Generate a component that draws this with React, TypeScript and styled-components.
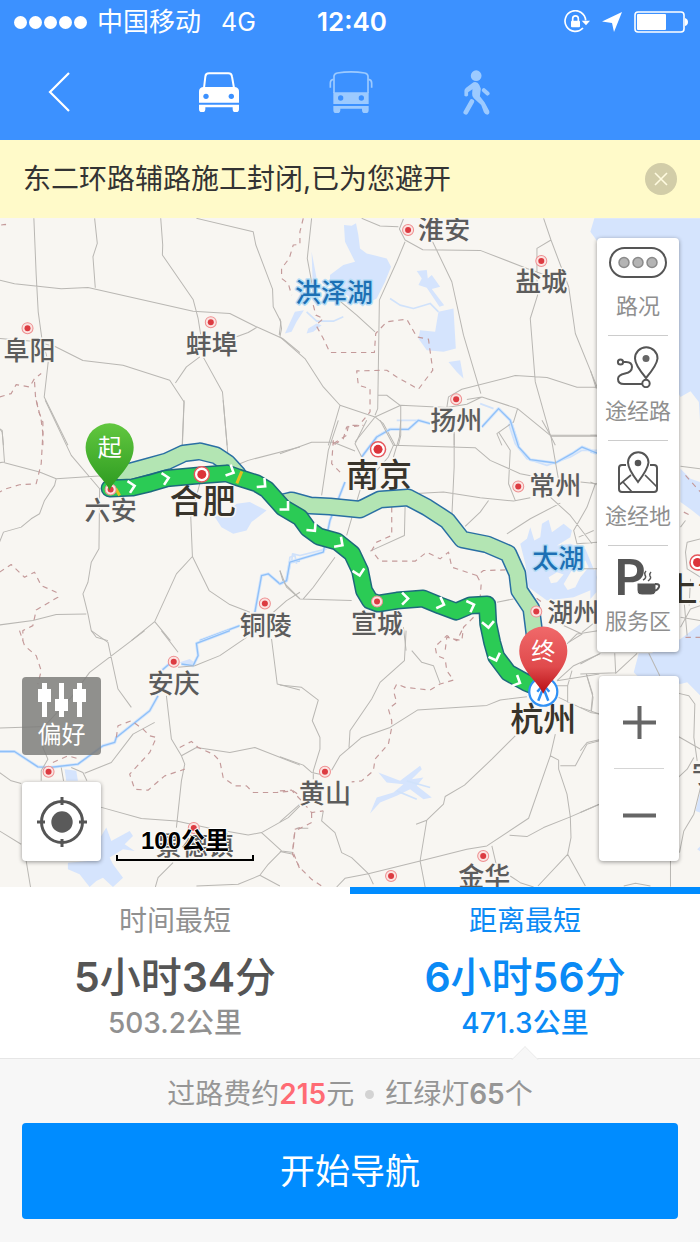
import React from 'react';
import styled, { createGlobalStyle } from 'styled-components';

const GlobalStyle = createGlobalStyle`
  *, *::before, *::after { box-sizing: border-box; }
  body {
    margin: 0;
    background: #f7f7f7;
    font-family: Inter, "Noto Sans CJK SC", sans-serif;
    color: #333;
  }
  button { font: inherit; color: inherit; border: 0; padding: 0; margin: 0; background: none; cursor: pointer; }
  p, ul { margin: 0; padding: 0; }
  ul { list-style: none; }
  svg { display: block; }
`;

const Page = styled.div`
  display: flex;
  flex-direction: column;
  min-height: 100vh;
`;

/* ---------- header ---------- */

const Header = styled.header`
  background: #3c91ff;
  color: #fff;
`;

const StatusBar = styled.div`
  display: grid;
  grid-template-columns: 1fr auto 1fr;
  align-items: center;
  height: 44px;
  padding: 0 12px 0 16px;
`;

const StatusGroup = styled.div<{ $end?: boolean }>`
  display: flex;
  align-items: center;
  justify-content: ${(p) => (p.$end ? 'flex-end' : 'flex-start')};
  gap: ${(p) => (p.$end ? 12 : 10)}px;
`;

const Signal = styled.div`
  display: flex;
  gap: 2px;
  margin-left: -2px;
`;

const SignalDot = styled.span`
  width: 13px;
  height: 13px;
  border-radius: 50%;
  background: #fff;
`;

const Carrier = styled.span`
  font-size: 26px;
  line-height: 32px;
`;

const Network = styled.span`
  font-size: 25px;
  line-height: 32px;
  padding-left: 10px;
`;

const Clock = styled.span`
  font-size: 26px;
  line-height: 32px;
  font-weight: 600;
`;

const NavBar = styled.nav`
  display: flex;
  align-items: center;
  height: 96px;
  padding-left: 48px;
  gap: 129px;
`;

const Modes = styled.div`
  display: flex;
  align-items: center;
  gap: 90px;
`;

const NavButton = styled.button<{ $active?: boolean }>`
  display: flex;
  color: ${(p) => (p.$active ? '#fff' : '#9ccaff')};
`;

/* ---------- notice ---------- */

const Notice = styled.div`
  display: flex;
  align-items: center;
  justify-content: space-between;
  min-height: 78px;
  padding: 0 23px;
  background: #fffac9;
`;

const NoticeText = styled.p`
  font-size: 28px;
  line-height: 40px;
`;

const CloseButton = styled.button`
  display: flex;
  align-items: center;
  justify-content: center;
  flex: none;
  width: 32px;
  height: 32px;
  border-radius: 50%;
  background: #d2cda8;
`;

/* ---------- map ---------- */

const MapArea = styled.main`
  position: relative;
  display: flex;
  justify-content: space-between;
  flex: 1;
  min-height: 660px;
  padding: 20px 21px 26px 22px;
  background: #f8f6f2;
  overflow: hidden;
`;

const MapCanvas = styled.svg`
  position: absolute;
  inset: 0;
  width: 100%;
  height: 100%;
  font-family: "Noto Sans CJK SC", sans-serif;
`;

const LeftControls = styled.div`
  position: relative;
  display: flex;
  align-items: flex-end;
  gap: 15px;
`;

const ButtonStack = styled.div`
  display: flex;
  flex-direction: column;
  gap: 27px;
`;

const PreferenceButton = styled.button`
  display: flex;
  flex-direction: column;
  align-items: center;
  justify-content: center;
  gap: 2px;
  width: 79px;
  height: 78px;
  border-radius: 4px;
  background: rgba(124, 124, 121, 0.84);
  color: #fff;
  font-size: 24px;
  line-height: 30px;
`;

const LocateButton = styled.button`
  display: flex;
  align-items: center;
  justify-content: center;
  width: 79px;
  height: 79px;
  border-radius: 4px;
  background: #fff;
  box-shadow: 0 1px 4px rgba(0, 0, 0, 0.4);
`;

const Scale = styled.div`
  width: 138px;
  text-align: center;
  color: #000;
  font-family: "Liberation Sans", "Noto Sans CJK SC", sans-serif;
  font-size: 24px;
  font-weight: 700;
  line-height: 28px;
  text-shadow: 1px 0 #fff, -1px 0 #fff, 0 1px #fff, 0 -1px #fff;
`;

const ScaleBar = styled.div`
  height: 6px;
  border: solid #000;
  border-width: 0 2px 2px;
`;

const RightControls = styled.div`
  position: relative;
  display: flex;
  flex-direction: column;
  align-items: flex-end;
  justify-content: space-between;
  gap: 24px;
`;

const Card = styled.ul`
  border-radius: 4px;
  background: #fff;
  box-shadow: 0 1px 4px rgba(0, 0, 0, 0.4);
`;

const LayerItem = styled.li`
  margin: 0 11px;
  padding: 10px 0 16px;
  border-top: 1px solid #ccc;

  &:first-child { padding-top: 2px; border-top-color: transparent; }
  &:last-child { padding-bottom: 18px; }
`;

const LayerButton = styled.button`
  display: flex;
  flex-direction: column;
  align-items: center;
  gap: 10px;
  width: 60px;
  color: #8f8f8f;
  font-size: 22px;
  line-height: 26px;
  white-space: nowrap;
`;

const LayerLabel = styled.span`
  display: flex;
  justify-content: center;
  width: 66px;
`;

const ZoomItem = styled.li`
  margin: 0 15px;

  & + & { border-top: 1px solid #d5d5d5; }
`;

const ZoomButton = styled.button`
  display: flex;
  align-items: center;
  justify-content: center;
  width: 50px;
  height: 92px;
`;

/* ---------- route choices ---------- */

const Choices = styled.section`
  display: grid;
  grid-template-columns: 1fr 1fr;
  background: #fff;
  border-bottom: 1px solid #e6e6e6;
`;

const Choice = styled.button<{ $active?: boolean }>`
  position: relative;
  display: flex;
  flex-direction: column;
  align-items: center;
  padding: 10px 0 18px;
  border-top: 7px solid ${(p) => (p.$active ? '#008cff' : '#fff')};
  color: ${(p) => (p.$active ? '#0a8af5' : '#909090')};

  ${(p) =>
    p.$active &&
    `&::after {
      content: '';
      position: absolute;
      left: 50%;
      bottom: -12px;
      width: 20px;
      height: 20px;
      margin-left: -10px;
      background: #f7f7f7;
      border: solid #ececec;
      border-width: 1px 0 0 1px;
      transform: rotate(45deg);
      clip-path: polygon(0 0, 100% 0, 0 100%);
    }`}
`;

const ChoiceTitle = styled.span`
  font-size: 28px;
  line-height: 34px;
`;

const ChoiceTime = styled.span<{ $active?: boolean }>`
  margin: 14px 0 4px;
  font-size: 41px;
  line-height: 50px;
  font-weight: 500;
  color: ${(p) => (p.$active ? 'inherit' : '#555')};
`;

const Digits = styled.b`
  font-weight: 600;
`;

const ChoiceDistance = styled.span`
  font-size: 28px;
  line-height: 34px;
  font-weight: 500;
`;

/* ---------- footer ---------- */

const Footer = styled.footer`
  padding: 18px 22px 24px;
  background: #f7f7f7;
`;

const Summary = styled.p`
  display: flex;
  align-items: center;
  justify-content: center;
  margin-bottom: 12px;
  font-size: 28px;
  line-height: 34px;
  color: #969696;
`;

const Toll = styled(Digits)`
  color: #ff6b74;
`;

const Dot = styled.span`
  width: 9px;
  height: 9px;
  margin: 0 11px;
  border-radius: 50%;
  background: #d3d3d3;
`;

const StartButton = styled.button`
  display: block;
  width: 100%;
  height: 96px;
  border-radius: 4px;
  background: #008cff;
  color: #fff;
  font-size: 35px;
  line-height: 44px;
`;

/* ---------- icons ---------- */

const BackIcon = () => (
  <svg width="22" height="42" viewBox="0 0 22 42" fill="none" stroke="#fff" strokeWidth="2.2">
    <path d="M21 2 L2 21 L21 40" />
  </svg>
);

const CarIcon = () => (
  <svg width="40" height="40" viewBox="0 0 120 120" fill="currentColor">
    <path d="M15 48 L19 14 Q20 4 30 4 H88 Q98 4 99 14 L105 48" fill="none" stroke="currentColor" strokeWidth="6" />
    <path d="M12 45 H108 Q120 47 120 58 V92 H0 V58 Q0 47 12 45Z" />
    <path d="M0 98 H120 V112 Q120 121 110 121 Q101 121 101 112 V106 H19 V112 Q19 121 10 121 Q0 121 0 112Z" />
    <g fill="#3c91ff">
      <circle cx="21" cy="73" r="8" />
      <circle cx="97" cy="73" r="8" />
    </g>
  </svg>
);

const BusIcon = () => (
  <svg width="44" height="42" viewBox="0 0 130 126" fill="currentColor">
    <path d="M14 66 V16 Q14 8 24 6 Q65 -1 106 6 Q116 8 116 16 V66" fill="none" stroke="currentColor" strokeWidth="5" />
    <path d="M12 64 H118 V99 H12Z" />
    <path d="M12 105 H118 V118 Q118 127 108 127 Q98 127 98 118 V113 H33 V118 Q33 127 22 127 Q12 127 12 118Z" />
    <path d="M13 25 Q3 26 3 36 V50 M117 25 Q127 26 127 36 V50" fill="none" stroke="currentColor" strokeWidth="5" />
    <g fill="#3c91ff">
      <circle cx="34" cy="81" r="8" />
      <circle cx="96" cy="81" r="8" />
    </g>
  </svg>
);

const WalkIcon = () => (
  <svg width="27" height="45" viewBox="0 0 80 134" fill="none" stroke="currentColor" strokeLinecap="round" strokeLinejoin="round">
    <circle cx="39" cy="17" r="16" fill="currentColor" stroke="none" />
    <path d="M36 36 Q44 36 48 44 L53 56 L50 78 L64 96 L78 122 Q80 132 72 133 Q66 133 62 126 L54 104 L32 84 Q26 78 27 70 L28 57 L15 66 V76 Q10 82 4 77 V62 Q4 57 9 53 L26 40 Q31 36 36 36Z" fill="currentColor" stroke="none" />
    <path d="M62 60 L73 70" strokeWidth="12" />
    <path d="M26 94 L8 126" strokeWidth="14" />
  </svg>
);

const RotationLockIcon = () => (
  <svg width="26" height="24" viewBox="0 0 78 70" fill="#fff">
    <path d="M57 53 A31 31 0 1 1 65 30" fill="none" stroke="#fff" strokeWidth="5" />
    <path d="M53 31 H78 L66 45Z" />
    <rect x="21" y="31" width="27" height="20" rx="3" />
    <path d="M26 32 V25 A8 8 0 0 1 43 25 V32" fill="none" stroke="#fff" strokeWidth="5" />
  </svg>
);

const LocationIcon = () => (
  <svg width="20" height="20" viewBox="0 0 20 20" fill="#fff">
    <path d="M20 0 L12 20 L10 11 L0 9.500Z" />
  </svg>
);

const BatteryIcon = () => (
  <svg width="54" height="22" viewBox="0 0 54 22" fill="#fff">
    <rect x="1" y="1" width="49" height="20" rx="3" fill="none" stroke="#fff" strokeWidth="1.6" />
    <rect x="3" y="3" width="29" height="16" rx="1" />
    <path d="M51 7 Q54 8 54 11 Q54 14 51 15Z" />
  </svg>
);

const CrossIcon = () => (
  <svg width="14" height="14" viewBox="0 0 14 14" stroke="#fffbe0" strokeWidth="1.6">
    <path d="M1 1 L13 13 M13 1 L1 13" />
  </svg>
);

const SlidersIcon = () => (
  <svg width="50" height="36" viewBox="0 0 50 36" fill="#fff">
    <path d="M5 1h5v34h-5z M22 1h5v34h-5z M40 1h5v34h-5z" />
    <path d="M1 7h13v13h-13z M18 17h13v12h-13z M36 7h13v13h-13z" />
  </svg>
);

const TargetIcon = () => (
  <svg width="50" height="50" viewBox="0 0 50 50" fill="none" stroke="#555" strokeWidth="3">
    <circle cx="25" cy="25" r="20.5" />
    <circle cx="25" cy="25" r="10.7" fill="#5a5a5a" stroke="none" />
    <path d="M25 0 V8 M25 42 V50 M0 25 H8 M42 25 H50" />
  </svg>
);

const LayerIcon = ({ children }: { children: React.ReactNode }) => (
  <svg width="60" height="42" viewBox="0 0 60 42" fill="none" stroke="#555" strokeWidth="2">
    {children}
  </svg>
);

const layers = [
  {
    label: '路况',
    icon: (
      <LayerIcon>
        <rect x="2" y="7" width="56" height="29" rx="14.5" />
        <g fill="#b4b4b4" stroke="#8a8a8a" strokeWidth="1.5">
          <circle cx="16" cy="21.5" r="5" />
          <circle cx="30" cy="21.5" r="5" />
          <circle cx="44" cy="21.5" r="5" />
        </g>
      </LayerIcon>
    ),
  },
  {
    label: '途经路',
    icon: (
      <LayerIcon>
        <path d="M38 32 Q27 19 27 12.5 A11 11 0 0 1 49.500 12.500 Q49 19 38 32Z" />
        <circle cx="38" cy="12.500" r="3.500" fill="#666" stroke="none" />
        <circle cx="38" cy="37.500" r="3.700" fill="#fff" />
        <circle cx="12.500" cy="16" r="2.600" />
        <path d="M15 16 H18 Q24 16 24 21 Q24 26 17 27.500 Q10 29 10 33 Q10 38 16 38 H34" />
      </LayerIcon>
    ),
  },
  {
    label: '途经地',
    icon: (
      <LayerIcon>
        <path d="M18 14 H14 Q11 14 11 17 V38 Q11 41 14 41 H46 Q49 41 49 38 V17 Q49 14 46 14 H42" />
        <path d="M11 34 L23 24 M15 31 L24 41 M37 24 L49 36" strokeWidth="1.700" />
        <path d="M30 31 Q20 18 20 11.500 A10 10 0 0 1 40.500 11.500 Q40 18 30 31Z" fill="#fff" />
        <circle cx="30" cy="12" r="3.300" fill="#555" stroke="none" />
      </LayerIcon>
    ),
  },
  {
    label: '服务区',
    icon: (
      <LayerIcon>
        <text x="6" y="39" fill="#555" stroke="none" fontFamily="Lato, sans-serif" fontWeight="700" fontSize="50">P</text>
        <path d="M29 27 H48 V34 Q48 39 43 39 H34 Q29 39 29 34Z" fill="#555" stroke="#fff" strokeWidth="1" />
        <path d="M47 28 H48 Q52 28 51 31 Q50 34 46 35" />
        <path d="M35 24 Q39 22 37 19 Q36 17 38 15 M40 25 Q44 22 42 20 Q41 18 43 16" strokeWidth="1.500" />
      </LayerIcon>
    ),
  },
];

/* ---------- map data ---------- */

/* Each tile is plotted from its own origin, three units to the pixel. */
type Tile = { x: number; y: number; roads: string; borders?: string; water?: string; land?: string; streams?: string; rivers?: string };

const tiles: Tile[] = [
  {
    x: 0, y: 215,
    roads: 'M103 10 L110 180 L116 290 L127 370 L146 440 L134 545 L205 690 M285 10 L293 85 L280 125 L287 218 M483 10 L489 90 L488 120 L580 253 L595 310 L603 360 L610 425 L668 530 L682 690 M590 10 L760 50 L768 90 L818 222 L820 275 L843 320 L838 360 M0 195 L45 206 L185 221 L265 217 L580 288 L690 295 L770 335 L848 370 L900 412 M0 370 L100 378 L165 393 L250 436 L370 450 L510 495 L553 560 L548 690 M770 337 L745 352 L710 365 M600 425 L560 455 L527 503 M0 640 L8 650 L12 690',
    borders: 'M0 545 L35 535 L50 508 L90 515 L105 490 L125 475 M105 500 L108 545 L118 590 L130 620 L130 690 M5 30 L18 28 L18 44',
  },
  {
    x: 280, y: 215,
    roads: 'M95 10 L82 130 L95 200 L100 235 M245 10 L300 33 L355 35 M370 12 L358 42 L375 75 L428 104 L600 106 L740 160 L790 178 M375 80 L350 140 L298 255 L293 580 L285 600 M455 75 L515 200 L550 360 L602 535 M790 10 L812 75 L865 215 L885 355 L950 515 M812 75 L770 100 L770 178 L772 240 L750 310 L765 500 L810 660 L825 690 M0 365 L75 430 L130 515 L180 570 L285 605 L310 625 L345 690 M180 570 L145 690 M285 605 L225 680 M293 540 L320 540 L362 572 L362 660 L355 690 M285 605 L362 570 L500 577 L560 567 L605 545 L712 580 L810 660 L950 660 M500 577 L505 545 L545 522 L705 481 L800 487 L890 516 L950 516 M560 553 L605 545 M712 580 L700 620 L650 655 L665 690 M170 250 L230 300 L285 350 M0 310 L5 340 L0 365 M522 650 V690',
    borders: 'M70 10 L60 50 L60 88 L40 90 L28 130 L5 160 L5 190 L25 205 L35 240 M100 270 L108 300 L130 310 L108 330 L130 370 L150 412 L283 412 L287 355 L320 320 L380 312 L410 365 L445 372 L458 465 L435 495 L415 522 L350 485 L320 465 L230 467 L235 510 L270 520 L270 590 L235 632 L200 635 L190 670 L160 690',
    water: 'M192 30 L215 32 L228 25 L235 60 L240 100 L260 115 L320 130 L333 155 L315 200 L290 250 L250 270 L150 210 L150 180 L190 150 L225 140 L195 80Z M410 168 L440 165 L443 190 L455 180 L480 215 L455 222 L492 270 L478 275 L440 218 L415 210 L425 190Z M475 290 L520 280 L527 400 L490 410 L440 405 L415 370 L420 345 L465 350 L470 320Z M505 440 L540 435 L550 490 L530 470Z M45 290 L72 285 L50 320 L35 350 L15 355Z M85 340 L110 325 L125 330 L100 350 L80 355Z M95 110 L112 200 L98 200Z',
    streams: 'M330 250 L360 270 L400 280 L450 265 L475 290 M80 290 L110 318 L160 318 L190 305 M600 565 L640 580',
    rivers: 'M275 690 L290 665 L330 642 L385 642 L415 615 L450 625 M605 635 L655 580 L690 615 L715 690',
  },
  {
    x: 590, y: 215,
    roads: 'M0 465 L18 520 M0 660 H18 M0 800 L18 808 M270 753 L330 760 M270 935 L285 915 M330 970 L290 980 L285 1010 L290 1060 L330 1085 M270 1205 L330 1215 M270 1235 L300 1180 L330 1170 M280 1150 L290 1260 M300 1090 L296 1170',
    borders: 'M285 780 L330 830 M280 890 L300 900 M285 1265 H330',
    water: 'M12 10 L0 50 L18 75 L270 545 L300 528 L325 560 L330 640 V10Z M270 760 L300 790 L330 800 V905 L305 885 L270 860Z M330 1225 L270 1270 L200 1300 L135 1350 H330Z M0 1075 L18 1060 V1130 L0 1150Z',
    rivers: 'M0 708 L18 714',
  },
  {
    x: 0, y: 400,
    roads: 'M137 0 L215 165 L300 265 L298 445 L275 485 L265 545 L250 580 L265 640 L275 690 L290 710 L325 720 M553 0 L547 140 M670 0 L684 160 M0 85 L8 90 L15 185 L0 187 M15 187 L120 215 L170 235 L310 226 M170 235 L165 255 L135 300 L120 340 L95 355 L65 380 L12 395 L0 425 M720 190 L745 180 L900 140 M600 250 L573 350 L578 468 L530 520 L465 663 L395 720 M465 663 L512 720 M578 468 L628 570 L690 612 L750 635 M0 673 L100 660 L170 642 L260 640 M840 510 L850 545 L900 595 M900 575 L860 600 L820 635',
    borders: 'M110 0 L125 60 L130 100 L125 190 L110 250 L60 253 L20 265 L0 275 M0 515 L35 492 L75 530 L105 515 L125 555 L170 575 L175 590 L110 628 L100 675 L70 690 L70 720',
    water: 'M645 350 L690 330 L710 310 L750 305 L800 330 L755 365 L740 390 L700 400 L665 380Z',
    streams: 'M865 510 L870 470 L885 465 L890 490',
    rivers: 'M600 720 L720 675 M765 635 L785 525 L805 520 L840 550 L860 540 L870 485 L900 480',
  },
  {
    x: 280, y: 420,
    roads: 'M0 100 L95 66 L160 66 L225 92 M175 0 L145 90 L125 225 M260 0 L225 70 L245 110 M300 0 L340 75 L325 110 L240 210 L210 310 L200 345 M362 0 L358 50 L340 110 M340 75 L585 82 L630 120 L720 160 L770 170 M522 40 L522 140 L515 290 M395 220 L490 215 L600 232 L700 242 L750 232 M625 240 L600 275 L555 318 M840 248 L750 295 L680 340 M810 230 L870 285 L935 370 M785 0 L812 48 L835 180 M812 48 H950 M655 35 L690 90 L685 190 L705 240 M900 185 L950 190 M945 190 L920 260 L880 330 L890 370 L950 365 M375 260 L373 345 L270 392 M0 450 L20 500 L60 535 L215 540 M165 410 L100 500 L70 535 M650 545 L700 535 M940 330 L895 350 M840 610 L905 640 L865 665 M905 635 L950 600 M370 620 L378 690 M905 445 H950',
    borders: 'M160 60 L155 130 L190 165 M160 70 L200 45 L205 15 L250 15 M335 260 V345 L290 365 L275 390 L300 422 L405 422 L440 395 L480 415 L505 395 L515 440 L590 465 L610 450 L680 448 M590 465 L603 490 L600 530 M580 590 L550 620 L545 660 L500 650 L495 690 M745 515 L785 545',
    water: 'M805 298 L815 335 L850 310 L875 330 L870 350 L830 375 L870 370 L915 385 L950 470 L940 505 L880 530 L800 540 L745 500 L735 430 L720 370 L740 355 L750 320 L762 360 L780 350 L785 310Z',
    land: 'M805 470 L830 455 L850 462 L830 485 L812 488Z M862 470 L880 440 L915 420 L925 440 L900 470 L885 500 L862 508 L850 490Z',
    streams: 'M685 10 L705 70 L740 115 L800 135 L870 110 L905 90 L950 90 M140 385 L60 405 L38 400 L35 425 M350 0 L420 0',
    rivers: 'M690 0 L715 80 L750 118 L825 128 L875 100 L905 80 L950 98 M245 110 L290 50 L330 27 M195 185 L150 300 L130 395 L30 425 L20 480 L0 490',
  },
  {
    x: 0, y: 630,
    roads: 'M275 0 L325 35 L355 175 L395 230 M435 0 L270 125 L215 200 L140 280 M485 0 L535 65 M740 20 L660 75 L585 105 L535 110 M815 25 L832 160 L900 178 M500 195 L515 325 L545 375 L555 400 L545 450 L530 590 M545 375 L590 350 L690 365 L765 350 L900 403 M0 292 L140 287 L130 350 L145 385 L125 420 V450 M465 275 L400 310 L335 395 L255 427 M185 410 L192 450 M215 410 L250 425 L262 450 M300 528 L425 563 L530 570 L630 592 L745 612 L785 605 L865 560 L900 525 M785 605 L845 660 L880 665 M845 660 L805 700 L780 733 L840 765 M780 733 L715 760 L590 765 M0 600 L65 640 M80 690 L93 768 M520 695 L475 740 L467 768 M0 425 L35 450 L65 458',
    borders: 'M60 0 L75 45 L110 75 L125 120 L115 160 M350 320 L355 285 L395 270 L430 295 L450 315 L470 320 L450 365 L390 430 L405 475 L445 478 L495 435 L555 415 M540 350 L575 332 L595 350 L640 370 L660 390 L670 440 L705 465 L740 465 L760 485 L830 485 L880 480 L900 495 M900 590 L885 595 L878 660 L900 715 M160 395 L205 375 L240 385',
    water: 'M195 415 L230 420 L235 450 H200Z M205 695 L265 690 L290 640 L320 590 L335 630 L390 600 L400 615 L375 640 L405 660 L370 655 L330 680 L340 700 L370 740 L340 768 L310 740 L290 750 L270 768 L240 730 L205 715Z M540 95 L570 85 L590 100 L560 108Z',
    rivers: 'M690 0 L590 38 L595 75 L580 105 L545 100 M520 90 L485 120 M475 195 L450 240 L350 320 L345 335 L310 345 L235 400 L150 410 L115 408 L45 362 L0 362',
  },
  {
    x: 280, y: 630,
    roads: 'M0 163 L65 170 L115 208 L97 270 L120 320 L120 355 L100 420 V445 M0 378 L70 403 L95 425 L120 430 M155 418 L180 375 L210 350 L245 320 L330 290 L412 238 L620 224 L660 208 L740 198 M378 0 L373 90 L300 155 L275 205 L210 300 L207 350 M395 60 L425 95 L460 105 L480 158 M705 315 L635 385 L553 463 L495 497 L490 520 L440 568 L408 580 M440 568 L420 690 L435 768 M825 310 L810 375 L745 562 L620 645 L560 655 L420 690 L265 728 L195 742 L170 768 M130 540 L125 570 L165 605 L185 665 L215 680 L265 728 L280 760 M0 573 L60 520 M50 592 H85 M0 662 L40 670 M810 375 L835 388 L835 415 L860 490 L870 558 L872 620 L862 670 L773 765 M862 670 L915 765 M840 405 H885 L920 340 L957 330 M688 613 L740 617 L790 590 L870 558 L957 520 M635 645 L648 700 M690 735 L720 755 L760 768 M835 200 L930 245 L957 250 M918 130 L937 190 L932 240 M830 150 L957 130 M830 165 H862 M875 120 L862 165 V215 M830 150 L880 105 L957 70 M860 40 L890 10 L957 0',
    borders: 'M545 0 L530 30 L500 15 L465 48 L470 75 L495 85 L500 120 L520 148 L480 160 L450 178 L375 170 L350 160 L340 180 L350 215 L325 235 L335 270 L335 290 L325 340 L285 385 L280 420 L245 450 L215 453 M0 480 L35 478 L65 510 L95 545 L130 540 M95 545 L95 575 L45 600 L38 670 L60 710 L95 745 L125 765',
    water: 'M270 548 L290 500 L340 485 L370 460 L320 455 L295 425 L360 450 L420 405 L425 415 L395 445 L430 440 L410 465 L455 500 L430 505 L390 475 L350 495 L300 515Z',
    streams: 'M380 450 L450 470 M350 480 L410 505',
  },
  {
    x: 580, y: 640,
    roads: 'M0 70 L60 38 M0 100 L108 96 L170 38 M103 38 L106 100 M205 38 L238 105 M18 100 L38 170 L33 213 M0 200 L57 220 M0 330 L20 305 L57 297 M0 515 L57 490 M295 158 L325 165 L343 190 L340 290 L350 360 M295 288 L360 325 M295 408 L320 385 L340 350 M360 440 L340 520 L310 570 L297 635 M270 660 V737 M130 735 L165 727 L210 735',
    water: 'M175 38 H360 V165 L320 125 L300 130 L170 105 L160 95Z M360 450 L345 510 L360 515Z M360 615 L350 625 L360 632Z',
  },
];

const cities = [
  { name: '阜阳', x: 30, y: 360, dot: [28, 328] },
  { name: '蚌埠', x: 212, y: 354, dot: [211, 322] },
  { name: '淮安', x: 444, y: 239, dot: [408, 230] },
  { name: '盐城', x: 541, y: 291, dot: [541, 261] },
  { name: '扬州', x: 456, y: 430, dot: [456, 399] },
  { name: '常州', x: 555, y: 495, dot: [518, 486] },
  { name: '六安', x: 111, y: 520, dot: [111, 489] },
  { name: '铜陵', x: 266, y: 634, dot: [265, 603] },
  { name: '宣城', x: 377, y: 632, dot: [377, 601] },
  { name: '湖州', x: 573, y: 621, dot: [536, 611] },
  { name: '安庆', x: 174, y: 692, dot: [174, 661] },
  { name: '黄山', x: 325, y: 802, dot: [325, 771] },
  { name: '景德镇', x: 195, y: 854, dot: [194, 827] },
  { name: '金华', x: 484, y: 885, dot: [483, 855] },
  { name: '宁波', x: 717, y: 782, dot: [720, 752] },
  { name: '', x: 0, y: 0, dot: [49, 771] },
  { name: '', x: 0, y: 0, dot: [391, 875] },
];

const capitals = [
  { name: '南京', x: 379, y: 487, dot: [378, 449] },
  { name: '合肥', x: 203, y: 513, dot: [202, 474] },
  { name: '杭州', x: 543, y: 730, dot: null },
  { name: '上海', x: 697, y: 600, dot: [697, 562] },
];

const lakes = [
  { name: '洪泽湖', x: 334, y: 302 },
  { name: '太湖', x: 558, y: 567 },
];

const mainRoute =
  'M110 488 L133 487 L150 483 L167 478 L200 475 L227 473 L238 477 L257 483 L267 489 L283 507 L300 517 L308 528 L319 536 L337 541 L352 553 L360 570 L364 590 L370 600 L378 603 L397 600 L423 598 L440 605 L456 611 L470 605 L487 604 L488 623 L492 642 L496 656 L508 672 L526 682 L543 689';
const otherRoutes =
  'M123 473 L145 467 L167 461 L184 453 L200 451 L216 455 L228 463 L238 474 M283 502 L292 500 L310 505 L330 506 L360 509 L380 499 L408 497 L427 507 L447 520 L462 539 L487 544 L508 553 L517 573 L519 590 L531 608 L535 640 L537 680';

/* x, y and heading in degrees */
const arrows = [
  [132, 486, -12], [166, 478, -12], [231, 471, 25], [263, 484, 40], [286, 507, 45],
  [313, 528, 50], [340, 543, 35], [359, 572, 78], [405, 598, 0], [441, 603, 20],
  [471, 605, -20], [488, 624, 85], [495, 657, 70], [517, 681, 25],
];

const Pin = ({ x, y, label, fill }: { x: number; y: number; label: string; fill: string }) => (
  <g transform={`translate(${x} ${y})`}>
    <path d="M0 0 C-5 -12 -24 -24 -24 -43 A24 24 0 1 1 24 -43 C24 -24 5 -12 0 0Z" fill={fill} />
    <text y="-34" textAnchor="middle" fontSize="24" fill="#fff">{label}</text>
  </g>
);

const RouteMap = () => (
  <MapCanvas viewBox="0 218 700 668" preserveAspectRatio="xMidYMid slice" role="img" aria-label="六安到杭州路线图">
    <defs>
      <linearGradient id="startFill" x2="0" y2="1">
        <stop offset="0" stopColor="#62c73f" />
        <stop offset="1" stopColor="#2c9a20" />
      </linearGradient>
      <linearGradient id="endFill" x2="0" y2="1">
        <stop offset="0" stopColor="#f0696a" />
        <stop offset="0.6" stopColor="#e04a4c" />
        <stop offset="1" stopColor="#b80f14" />
      </linearGradient>
    </defs>

    {tiles.map((t) => (
      <g key={`${t.x}-${t.y}`} transform={`translate(${t.x} ${t.y}) scale(${1 / 3})`} fill="none" strokeLinejoin="round">
        <path d={t.water} fill="#d5e4fd" />
        <path d={t.land} fill="#f8f6f2" />
        <path d={t.streams} stroke="#d0e2fb" strokeWidth="5" />
      </g>
    ))}
    {tiles.map((t) => (
      <g key={`${t.x}-${t.y}`} transform={`translate(${t.x} ${t.y}) scale(${1 / 3})`} fill="none" strokeLinejoin="round">
        <path d={t.rivers} stroke="#d3e5fc" strokeWidth="9" />
        <path d={t.rivers} stroke="#8fc0f8" strokeWidth="4" />
        <path d={t.roads} stroke="#b9b7b3" strokeWidth="3" />
        <path d={t.borders} stroke="#c49a9a" strokeWidth="3.500" strokeDasharray="16 14" />
      </g>
    ))}

    <g textAnchor="middle" stroke="#f8f6f2" strokeWidth="3" paintOrder="stroke" strokeLinejoin="round">
      <g fontSize="26" fontWeight="500" fill="#5c5c5c">
        {cities.map((c, i) => <text key={i} x={c.x} y={c.y}>{c.name}</text>)}
      </g>
      <g fontSize="33" fontWeight="500" fill="#38342b">
        {capitals.map((c) => <text key={c.name} x={c.x} y={c.y}>{c.name}</text>)}
      </g>
      <g fontSize="26" fontWeight="500" fill="#1c70b4" stroke="#b5dcf5">
        {lakes.map((c) => <text key={c.name} x={c.x} y={c.y}>{c.name}</text>)}
      </g>
    </g>

    <g fill="none" strokeLinejoin="round" strokeLinecap="round">
      <path d={otherRoutes} stroke="#2a6fa3" strokeWidth="18" />
      <path d={otherRoutes} stroke="#b3e5b3" strokeWidth="15" />
      <path d={mainRoute} stroke="#1d6a7c" strokeWidth="18" />
      <path d={mainRoute} stroke="#2bcb55" strokeWidth="15" />
      <path d="M242 471 L237 483 M116 488 L120 495" stroke="#e0c01f" strokeWidth="3" strokeLinecap="butt" />
      <g stroke="#fff" strokeWidth="2.600" strokeLinecap="butt" strokeLinejoin="miter">
        {arrows.map(([x, y, a]) => (
          <path key={`${x}-${y}`} transform={`translate(${x} ${y}) rotate(${a})`} d="M-3 -6 L3 0 L-3 6" />
        ))}
      </g>
    </g>

    {cities.map(({ dot: [x, y] }) => (
      <g key={`${x}-${y}`} fill="#fbe3e1" stroke="#ee8f90" strokeWidth="1">
        <circle cx={x} cy={y} r="5.500" />
        <circle cx={x} cy={y} r="3" fill="#dc3b41" stroke="none" />
      </g>
    ))}
    {capitals.map(({ dot }) => dot && (
      <g key={dot[0]} fill="#fff" stroke="#e6575c" strokeWidth="1.500">
        <circle cx={dot[0]} cy={dot[1]} r="7.500" />
        <circle cx={dot[0]} cy={dot[1]} r="4.500" fill="#dc333a" stroke="none" />
      </g>
    ))}

    <circle cx="543" cy="691" r="14" fill="#fff" stroke="#2e90f5" strokeWidth="2.200" />
    <path d="M543 684 L537 691 M543 684 L549 691 M543 687 L538 700 M543 687 L548 700" stroke="#2e90f5" strokeWidth="2.500" />
    <Pin x={110} y={490} label="起" fill="url(#startFill)" />
    <Pin x={543} y={693} label="终" fill="url(#endFill)" />
  </MapCanvas>
);

export default function App() {
  return (
    <Page>
      <GlobalStyle />
      <Header>
        <StatusBar>
          <StatusGroup>
            <Signal>
              {[0, 1, 2, 3, 4].map((i) => <SignalDot key={i} />)}
            </Signal>
            <Carrier>中国移动</Carrier>
            <Network>4G</Network>
          </StatusGroup>
          <Clock>12:40</Clock>
          <StatusGroup $end>
            <RotationLockIcon />
            <LocationIcon />
            <BatteryIcon />
          </StatusGroup>
        </StatusBar>
        <NavBar>
          <NavButton $active aria-label="返回"><BackIcon /></NavButton>
          <Modes>
            <NavButton $active aria-label="驾车"><CarIcon /></NavButton>
            <NavButton aria-label="公交"><BusIcon /></NavButton>
            <NavButton aria-label="步行"><WalkIcon /></NavButton>
          </Modes>
        </NavBar>
      </Header>

      <Notice>
        <NoticeText>东二环路辅路施工封闭,已为您避开</NoticeText>
        <CloseButton aria-label="关闭"><CrossIcon /></CloseButton>
      </Notice>

      <MapArea>
        <RouteMap />
        <LeftControls>
          <ButtonStack>
            <PreferenceButton>
              <SlidersIcon />
              偏好
            </PreferenceButton>
            <LocateButton aria-label="定位"><TargetIcon /></LocateButton>
          </ButtonStack>
          <Scale>
            100公里
            <ScaleBar />
          </Scale>
        </LeftControls>
        <RightControls>
          <Card>
            {layers.map((l) => (
              <LayerItem key={l.label}>
                <LayerButton>
                  {l.icon}
                  <LayerLabel>{l.label}</LayerLabel>
                </LayerButton>
              </LayerItem>
            ))}
          </Card>
          <Card>
            <ZoomItem>
              <ZoomButton aria-label="放大">
                <svg width="33" height="33" viewBox="0 0 33 33" stroke="#666" strokeWidth="4"><path d="M0 16.500 H33 M16.500 0 V33" /></svg>
              </ZoomButton>
            </ZoomItem>
            <ZoomItem>
              <ZoomButton aria-label="缩小">
                <svg width="33" height="33" viewBox="0 0 33 33" stroke="#666" strokeWidth="4"><path d="M0 16.500 H33" /></svg>
              </ZoomButton>
            </ZoomItem>
          </Card>
        </RightControls>
      </MapArea>

      <Choices>
        <Choice>
          <ChoiceTitle>时间最短</ChoiceTitle>
          <ChoiceTime><Digits>5</Digits>小时<Digits>34</Digits>分</ChoiceTime>
          <ChoiceDistance>503.2公里</ChoiceDistance>
        </Choice>
        <Choice $active>
          <ChoiceTitle>距离最短</ChoiceTitle>
          <ChoiceTime $active><Digits>6</Digits>小时<Digits>56</Digits>分</ChoiceTime>
          <ChoiceDistance>471.3公里</ChoiceDistance>
        </Choice>
      </Choices>

      <Footer>
        <Summary>
          过路费约<Toll>215</Toll>元<Dot />红绿灯<Digits>65</Digits>个
        </Summary>
        <StartButton>开始导航</StartButton>
      </Footer>
    </Page>
  );
}
